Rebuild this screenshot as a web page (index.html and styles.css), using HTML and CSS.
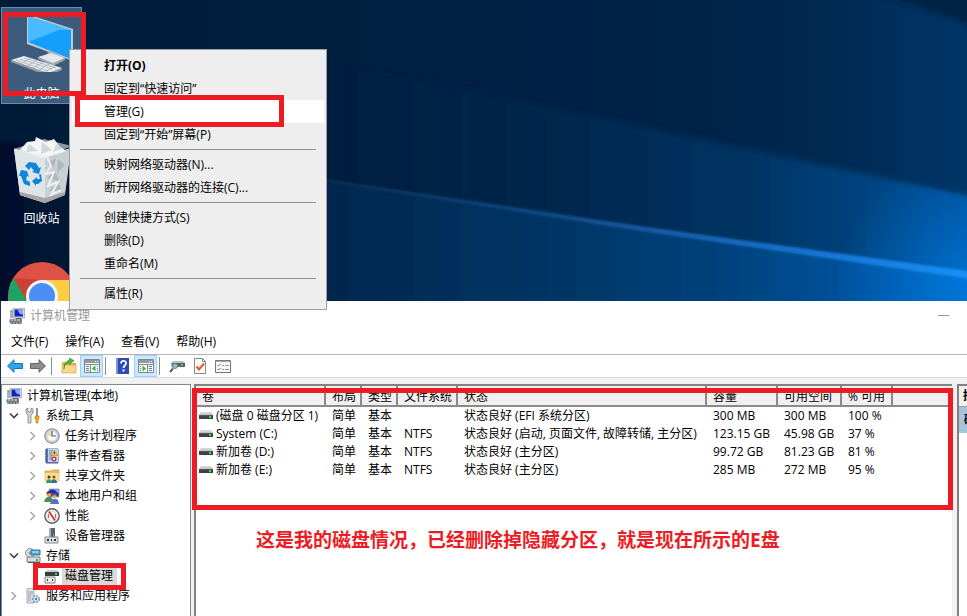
FILE: index.html
```html
<!DOCTYPE html>
<html lang="zh-CN">
<head>
  <meta charset="UTF-8">
  <title>计算机管理</title>
  <link rel="stylesheet" href="styles.css">
</head>
<body>
  <!-- shared icons -->
  <svg class="defs" aria-hidden="true">
    <symbol id="pc" viewBox="0 0 16 16">
      <rect x="1" y="2" width="3" height="8" fill="#a9b3bd"/>
      <rect x="2" y="3" width="1" height="1" fill="#3cc43c"/>
      <path d="M4 0h11.500v10H4z" fill="#d5d8dc" stroke="#8b939b" stroke-width=".6"/>
      <path d="M5.500 1.500h8.500v7H5.500z" fill="#1722b8"/>
      <path d="M9 1.500h5v5c-3 0-5-2-5-5z" fill="#8ea4ff"/>
      <path d="M7 10h5l1 1.500H6z" fill="#59636c"/>
      <path d="M1 11h12v3H0z" fill="#6f7b85"/>
      <path d="M2 12h2M5 12h2M8 12h3" stroke="#e8ecef"/>
      <path d="M1 14h12v2H1z" fill="#929ba2"/>
      <path d="M3 15h1M6 15h1M9 15h1" stroke="#333"/>
    </symbol>
    <symbol id="drive" viewBox="0 0 14 8">
      <path d="M2 0h10l2 3H0z" fill="#d3d6d9"/>
      <path d="M0 3h14v4H0z" fill="#3c4247"/>
      <path d="M0 3h14" stroke="#8b9094" stroke-width=".6"/>
      <rect x="10" y="4" width="2" height="2" fill="#36e336"/>
    </symbol>
    <symbol id="closed" viewBox="0 0 8 10">
      <path d="M1.500 1l4 4-4 4" fill="none" stroke="#a6a6a6" stroke-width="1.500"/>
    </symbol>
    <symbol id="opened" viewBox="0 0 10 8">
      <path d="M1 1.500l4 4 4-4" fill="none" stroke="#404040" stroke-width="1.600"/>
    </symbol>
    <symbol id="arrow" viewBox="0 0 16 14">
      <path d="M.5 7L7 .7v3.800h8.500v5H7v3.800z"/>
    </symbol>
  </svg>

  <section class="desktop">
    <svg class="wallpaper" viewBox="0 0 967 301" preserveAspectRatio="none" aria-hidden="true">
      <defs>
        <linearGradient id="sky" x1="0" y1="0" x2="1" y2="0">
          <stop offset="0" stop-color="#001b38"/>
          <stop offset=".35" stop-color="#001f3f"/>
          <stop offset=".7" stop-color="#002248"/>
          <stop offset=".85" stop-color="#002850"/>
          <stop offset="1" stop-color="#003668"/>
        </linearGradient>
        <linearGradient id="mid" x1="327" y1="0" x2="967" y2="0" gradientUnits="userSpaceOnUse">
          <stop offset="0" stop-color="#002247" stop-opacity="0"/>
          <stop offset=".4" stop-color="#002850"/>
          <stop offset=".65" stop-color="#003362"/>
          <stop offset=".85" stop-color="#004480"/>
          <stop offset="1" stop-color="#00529c"/>
        </linearGradient>
        <linearGradient id="low" x1="0" y1="0" x2="967" y2="0" gradientUnits="userSpaceOnUse">
          <stop offset="0" stop-color="#00102c"/>
          <stop offset=".35" stop-color="#002850"/>
          <stop offset=".6" stop-color="#003768"/>
          <stop offset=".75" stop-color="#00427c"/>
          <stop offset=".9" stop-color="#0055a2"/>
          <stop offset="1" stop-color="#0064bc"/>
        </linearGradient>
        <linearGradient id="beam" x1="327" y1="0" x2="967" y2="0" gradientUnits="userSpaceOnUse">
          <stop offset="0" stop-color="#123a66" stop-opacity=".5"/>
          <stop offset=".4" stop-color="#125090"/>
          <stop offset=".75" stop-color="#1272d0"/>
          <stop offset="1" stop-color="#1490f4"/>
        </linearGradient>
        <radialGradient id="glow" cx="967" cy="280" r="130" gradientUnits="userSpaceOnUse">
          <stop offset="0" stop-color="#0084f0" stop-opacity=".6"/>
          <stop offset="1" stop-color="#0078e0" stop-opacity="0"/>
        </radialGradient>
        <filter id="soft"><feGaussianBlur stdDeviation="3"/></filter>
        <filter id="softer"><feGaussianBlur stdDeviation="1"/></filter>
      </defs>
      <path d="M0 0h967v301H0z" fill="url(#sky)"/>
      <path d="M870-10h120v42z" fill="#002244" filter="url(#soft)"/>
      <path d="M327 60L640 126L990 201V290L640 229L327 181z" fill="url(#mid)" filter="url(#soft)"/>
      <path d="M-20 138L327 181L640 229L990 279V330H-20z" fill="url(#low)" filter="url(#softer)"/>
      <path d="M760 150L967 196V301H700z" fill="url(#glow)"/>
      <path d="M327 179L640 226L990 274V282L640 231L327 182z" fill="url(#beam)" filter="url(#softer)"/>
    </svg>

    <div class="shortcuts">
      <a class="shortcut selected" href="#">
        <svg width="64" height="64" viewBox="0 0 64 64" aria-hidden="true">
          <path d="M17 6l46 15v32L17 36z" fill="#c2c9cf"/>
          <path d="M18 8l43 14v29L18 34z" fill="#14a0fa"/>
          <path d="M18 8l43 14-12 0-31 12z" fill="#49bcff"/>
          <path d="M38 43l10 4-1 5-10-3z" fill="#9aa5ad"/>
          <path d="M28 49l13-4 14 5-12 6z" fill="#e4e8eb"/>
          <path d="M28 49l15 6 12-5v2l-12 6-15-7z" fill="#a0a8ae"/>
          <path d="M1 52l13-4 38 12-14 6z" fill="#e9ecee"/>
          <path d="M1 52l37 13 14-5v2l-14 6L1 54z" fill="#949da5"/>
          <path d="M6 52l32 11M10 51l32 10M14 50l32 10M11 56l10-6M17 58l10-6M23 60l10-6M29 62l10-6M35 64l10-6" stroke="#a7b0b7" stroke-width=".8"/>
        </svg>
        <span>此电脑</span>
      </a>
      <a class="shortcut" href="#">
        <svg width="64" height="68" viewBox="0 0 64 68" aria-hidden="true">
          <path d="M4 14l31 8 26-8-6 46-20 8-25-8z" fill="#c9d0d4"/>
          <path d="M4 14l31 8v46l-25-8z" fill="#dfe4e7"/>
          <path d="M4 14L34 4l28 7-27 11z" fill="#8698a6"/>
          <path d="M10 15l7-8 8-1 1-4 10 5 8-3 6 8 7 4-23 7z" fill="#f3f5f6"/>
          <path d="M19 9l9 7-12 1zM32 7l10 8-11 4zM46 9l-3 8 9-3z" fill="#d2d7da"/>
          <path d="M37 28l9-5-2 9zM48 24l7 6-8 8zM37 43l8-8 4 11zM39 56l9-9 4 9z" fill="#adb7be"/>
          <path d="M37 22l4 9-5 8 8-2-6 14 10-4-7 13 10-5" fill="none" stroke="#edf0f1" stroke-width="2"/>
          <path d="M10 60l25 8 20-8v-3l-20 6-25-6z" fill="#a7a5a5"/>
          <path d="M4 14l31 8 27-9" fill="none" stroke="#edf1f4"/>
          <path d="M15 31l4-4 7 1 3 5 2-1-2 7-7-2 2-1-3-4-2 3zM11 35l6 1 2 6-2-1-1 4 4 2v4l-6-2-3-8-2 0zM22 46l5-4v2l3 0-1-4 2-1 1 7-4 3-2 0v2z" fill="#0e86da"/>
        </svg>
        <span>回收站</span>
      </a>
      <a class="shortcut" href="#" aria-label="Chrome">
        <svg width="68" height="68" viewBox="0 0 68 68" aria-hidden="true">
          <circle cx="34" cy="34" r="34" fill="#de5246"/>
          <path d="M34 34L5.500 16A34 34 0 0 0 34 68z" fill="#1ea362"/>
          <path d="M34 18h30a34 34 0 0 1-30 50z" fill="#ffcd42"/>
          <path d="M5.500 16l16 28L34 18z" fill="#c94236"/>
          <circle cx="34" cy="34" r="16" fill="#f4f6f7"/>
          <circle cx="34" cy="34" r="13" fill="#4d8df6"/>
        </svg>
      </a>
    </div>

    <div class="context-menu">
      <button class="default">打开(O)</button>
      <button>固定到“快速访问”</button>
      <button class="hover">管理(G)<i class="mark mark-manage"></i></button>
      <button>固定到“开始”屏幕(P)</button>
      <hr>
      <button>映射网络驱动器(N)...</button>
      <button>断开网络驱动器的连接(C)...</button>
      <hr>
      <button>创建快捷方式(S)</button>
      <button>删除(D)</button>
      <button>重命名(M)</button>
      <hr>
      <button>属性(R)</button>
    </div>
    <i class="mark mark-pc"></i>
  </section>

  <main class="window">
    <header class="titlebar">
      <svg width="16" height="16"><use href="#pc"/></svg>
      <span>计算机管理</span>
      <button class="minimize" aria-label="最小化"></button>
    </header>
    <nav class="menubar">
      <button>文件(F)</button>
      <button>操作(A)</button>
      <button>查看(V)</button>
      <button>帮助(H)</button>
    </nav>
    <div class="toolbar">
      <button aria-label="后退"><svg width="16" height="14" fill="#2fa5e6" stroke="#1878b5"><use href="#arrow"/></svg></button>
      <button aria-label="前进"><svg class="flip" width="16" height="14" fill="#8c8c8c" stroke="#636363"><use href="#arrow"/></svg></button>
      <span class="sep"></span>
      <button aria-label="上一级">
        <svg width="16" height="16" viewBox="0 0 16 16">
          <path d="M1 4h5l1 1h8v10H1z" fill="#d9b354"/>
          <path d="M1 7h14v8H1z" fill="#f4d98a" stroke="#c59f45" stroke-width=".6"/>
          <path d="M3 11c0-4 2-6 5-6.500V6.500l5-3.800L8.500 0v2C5 3 3 6 3 11z" fill="#46b830" stroke="#2c8a1e" stroke-width=".6"/>
        </svg>
      </button>
      <button class="active" aria-label="显示控制台树">
        <svg width="16" height="14" viewBox="0 0 16 14">
          <path d="M.5.5h15v13H.5z" fill="#fff" stroke="#7d8791"/>
          <path d="M1 1h14v3H1z" fill="#909aa3"/><path d="M11 2.500h1M13 2.500h1" stroke="#fff"/>
          <path d="M0 5.500h16M6.500 5v9" stroke="#7d8791"/>
          <path d="M2 7.500h3M2 9.500h3M2 11.500h3M13 7.500h1M13 9.500h1M13 11.500h1" stroke="#557bb5"/>
          <path d="M11.500 6.500v6L8 9.500z" fill="#39b51c"/>
        </svg>
      </button>
      <span class="sep"></span>
      <button aria-label="帮助">
        <svg width="13" height="16" viewBox="0 0 13 16">
          <path d="M0 0h13v16H0z" fill="#2a4cb4"/><path d="M0 0h2v16H0z" fill="#7a94dd"/>
          <path d="M5 5.500C5 2 10 2 10 5.200C10 7.500 7.500 7.500 7.500 10" fill="none" stroke="#fff" stroke-width="1.800"/>
          <path d="M6.500 11.500h2v2h-2z" fill="#fff"/>
        </svg>
      </button>
      <button class="active" aria-label="显示操作窗格">
        <svg width="16" height="14" viewBox="0 0 16 14">
          <path d="M.5.5h15v13H.5z" fill="#fff" stroke="#7d8791"/>
          <path d="M1 1h14v3H1z" fill="#909aa3"/><path d="M11 2.500h1M13 2.500h1" stroke="#fff"/>
          <path d="M0 5.500h16M9.500 5v9" stroke="#7d8791"/>
          <path d="M11 7.500h3M11 9.500h3M11 11.500h3M2 7.500h1M2 9.500h1M2 11.500h1" stroke="#557bb5"/>
          <path d="M4.500 6.500v6L8 9.500z" fill="#39b51c"/>
        </svg>
      </button>
      <span class="sep"></span>
      <button aria-label="连接">
        <svg width="16" height="14" viewBox="0 0 16 14">
          <path d="M4 2h10l2 2v4H2V4z" fill="#b9bec2"/><path d="M3 4h13v4H3z" fill="#59636a"/>
          <rect x="12" y="5" width="2" height="2" fill="#32d84c"/>
          <circle cx="6" cy="7" r="2.500" fill="#9fb9cb" stroke="#6e7e8a"/>
          <path d="M4 9.500L1 13" stroke="#555f68" stroke-width="2"/>
        </svg>
      </button>
      <button aria-label="检查">
        <svg width="12" height="16" viewBox="0 0 12 16">
          <path d="M.5.5h8l3 3v12H.5z" fill="#fff" stroke="#878787"/>
          <path d="M8.500.5v3h3" fill="none" stroke="#878787"/>
          <path d="M2.500 8.500L5 11.500l5-6" fill="none" stroke="#e2572b" stroke-width="2"/>
        </svg>
      </button>
      <button aria-label="属性">
        <svg width="16" height="13" viewBox="0 0 16 13">
          <path d="M.5.5h15v12H.5z" fill="#f5f6f7" stroke="#777"/>
          <path d="M1 1.500h14" stroke="#aaa"/>
          <path d="M2.500 5l1 1 2-2M2.500 9l1 1 2-2" fill="none" stroke="#2d7ec9"/>
          <path d="M7 5.500h2M10 5.500h4M7 9.500h2M10 9.500h4" stroke="#8d969d"/>
        </svg>
      </button>
    </div>

    <div class="panes">
      <aside class="tree">
        <ul>
          <li class="root"><svg class="icon"><use href="#pc"/></svg><span>计算机管理(本地)</span></li>
          <li class="group">
            <svg class="toggle"><use href="#opened"/></svg>
            <svg class="icon" viewBox="0 0 16 16">
              <path d="M1 1v4l2 2v8h3V7l2-2V1L6 0v4H3V0z" fill="#d4d7da" stroke="#777e84" stroke-width=".8"/>
              <path d="M11 0h2v8h-2z" fill="#8d9499"/><path d="M10 8h4v3l-1 1v3h-2v-3l-1-1z" fill="#f0a818" stroke="#b97a0c" stroke-width=".6"/>
            </svg>
            <span>系统工具</span>
          </li>
          <li class="leaf">
            <svg class="toggle"><use href="#closed"/></svg>
            <svg class="icon" viewBox="0 0 16 16">
              <circle cx="8" cy="8" r="7.200" fill="#d9dcdf" stroke="#767c82"/><circle cx="8" cy="8" r="5.400" fill="#f8f8f5" stroke="#a5a9ac" stroke-width=".6"/>
              <path d="M8 2.800v5.200H3a5 5 0 0 1 5-5.200z" fill="#f6dfa0"/><path d="M8 3v5h4" fill="none" stroke="#3668a8" stroke-width="1.200"/>
            </svg>
            <span>任务计划程序</span>
          </li>
          <li class="leaf">
            <svg class="toggle"><use href="#closed"/></svg>
            <svg class="icon" viewBox="0 0 16 16">
              <path d="M2 1h12v14H2z" fill="#5478b8" stroke="#43659a"/><path d="M4 1h10v13H4z" fill="#c7d5ea"/>
              <path d="M5 3h4M5 5h3M5 7h3M5 9h3M5 11h3" stroke="#6685b5"/><path d="M10.500 2l3 5.500h-6z" fill="#ffd21a" stroke="#a98500" stroke-width=".6"/><path d="M10.500 4v2" stroke="#222"/>
              <circle cx="10" cy="11" r="2.500" fill="#d8293b"/><path d="M9 10l2 2M11 10l-2 2" stroke="#fff"/>
              <path d="M1 3h2M1 6h2M1 9h2M1 12h2" stroke="#555"/>
            </svg>
            <span>事件查看器</span>
          </li>
          <li class="leaf">
            <svg class="toggle"><use href="#closed"/></svg>
            <svg class="icon" viewBox="0 0 16 16">
              <path d="M1 3h6l1-1h7v11H1z" fill="#e7c05e" stroke="#ba913b" stroke-width=".6"/><path d="M1 5h14v9H1z" fill="#f8dd91"/>
              <circle cx="5" cy="9" r="1.500" fill="#53352a"/><path d="M2 15c0-5 6-5 6 0z" fill="#3d9c54"/><circle cx="10" cy="9" r="1.500" fill="#7c5338"/><path d="M7 15c0-5 6-5 6 0z" fill="#2f6fb0"/>
            </svg>
            <span>共享文件夹</span>
          </li>
          <li class="leaf">
            <svg class="toggle"><use href="#closed"/></svg>
            <svg class="icon" viewBox="0 0 16 16">
              <path d="M5 1h10v8H5z" fill="#1a2fbe" stroke="#aab0b8"/><path d="M10 1.500h4.500v4z" fill="#8ca3ff"/>
              <circle cx="5" cy="6" r="2.500" fill="#d8a171"/><path d="M2.500 6c0-4 5-4 5 0l-2-1z" fill="#4c3020"/><path d="M0 14c1-7 9-7 9 0z" fill="#4d8e50"/>
              <circle cx="10.500" cy="8" r="2.300" fill="#dfb07f"/><path d="M8 8c0-4 5-4 5 0l-2-1z" fill="#7a5230"/><path d="M6 16c1-7 9-7 9 0z" fill="#5176bd"/>
            </svg>
            <span>本地用户和组</span>
          </li>
          <li class="leaf">
            <svg class="toggle"><use href="#closed"/></svg>
            <svg class="icon" viewBox="0 0 16 16">
              <circle cx="8" cy="8" r="7.200" fill="#fff" stroke="#555b60" stroke-width="1.400"/>
              <circle cx="8" cy="8" r="5" fill="#f7f7f7" stroke="#b9bdc0" stroke-width=".6"/>
              <path d="M5 3.500l6 9" stroke="#d02932" stroke-width="1.600"/><path d="M4.500 10V6M11.500 6v4" fill="none" stroke="#e05a60"/>
            </svg>
            <span>性能</span>
          </li>
          <li class="leaf">
            <svg class="toggle"></svg>
            <svg class="icon" viewBox="0 0 16 16">
              <path d="M6 0h5v9H6z" fill="#596168"/><path d="M5 0h2v9H5z" fill="#a9b0b6"/><rect x="9" y="6" width="1" height="2" fill="#36d14b"/>
              <path d="M1 9h13v6H1z" fill="#dcdfe1" stroke="#858b90"/><path d="M3 12h2M7 12h1M10 12h2" stroke="#333" stroke-width="2"/>
            </svg>
            <span>设备管理器</span>
          </li>
          <li class="group">
            <svg class="toggle"><use href="#opened"/></svg>
            <svg class="icon" viewBox="0 0 16 16">
              <circle cx="5" cy="5" r="4.500" fill="#d8dde1" stroke="#89939b"/><circle cx="5" cy="5" r="1.500" fill="#899ba7"/>
              <path d="M6 2h9v5H6z" fill="#4fa6d2" stroke="#3a7797"/><path d="M7 4h7" stroke="#c4ebfb"/>
              <path d="M2 9h13v5H2z" fill="#d8dcdf" stroke="#767f86"/><path d="M3 14.500h12" stroke="#555"/><rect x="11" y="11" width="2" height="2" fill="#2faf3b"/>
            </svg>
            <span>存储</span>
          </li>
          <li class="leaf current">
            <svg class="toggle"></svg>
            <svg class="icon" viewBox="0 0 16 16">
              <path d="M3 2h10l2 2H1z" fill="#c8ccd0"/><path d="M1 4h14v4H1z" fill="#383d41"/><rect x="11" y="5" width="2" height="2" fill="#36d14b"/>
              <path d="M1 9h10v6H1z" fill="#e9ebec" stroke="#7c8287"/><path d="M3 12h1M8 12h1" stroke="#333" stroke-width="2"/>
            </svg>
            <span>磁盘管理</span>
            <i class="mark mark-disk"></i>
          </li>
          <li class="group">
            <svg class="toggle"><use href="#closed"/></svg>
            <svg class="icon" viewBox="0 0 16 16">
              <path d="M2 1l4-1 3 1v14H2z" fill="#dce1e5" stroke="#929ba2" stroke-width=".8"/><path d="M3 4h5M3 6h5M3 8h3M3 10h3M3 12h3" stroke="#9aa3aa"/>
              <circle cx="11" cy="11" r="3.300" fill="#d7e8f5" stroke="#7894aa" stroke-width="1.500" stroke-dasharray="2 1"/><circle cx="11" cy="11" r="1.300" fill="#6687a2"/>
            </svg>
            <span>服务和应用程序</span>
          </li>
        </ul>
      </aside>

      <section class="volumes">
        <table>
          <colgroup>
            <col class="c-name"><col class="c-short"><col class="c-short"><col class="c-fs"><col>
            <col class="c-size"><col class="c-free"><col class="c-pct"><col class="c-rest">
          </colgroup>
          <thead>
            <tr><th>卷</th><th>布局</th><th>类型</th><th>文件系统</th><th>状态</th><th>容量</th><th>可用空间</th><th>% 可用</th><th></th></tr>
          </thead>
          <tbody>
            <tr><td><svg class="drive"><use href="#drive"/></svg>(磁盘 0 磁盘分区 1)</td><td>简单</td><td>基本</td><td></td><td>状态良好 (EFI 系统分区)</td><td>300 MB</td><td>300 MB</td><td>100 %</td><td></td></tr>
            <tr><td><svg class="drive"><use href="#drive"/></svg>System (C:)</td><td>简单</td><td>基本</td><td>NTFS</td><td>状态良好 (启动, 页面文件, 故障转储, 主分区)</td><td>123.15 GB</td><td>45.98 GB</td><td>37 %</td><td></td></tr>
            <tr><td><svg class="drive"><use href="#drive"/></svg>新加卷 (D:)</td><td>简单</td><td>基本</td><td>NTFS</td><td>状态良好 (主分区)</td><td>99.72 GB</td><td>81.23 GB</td><td>81 %</td><td></td></tr>
            <tr><td><svg class="drive"><use href="#drive"/></svg>新加卷 (E:)</td><td>简单</td><td>基本</td><td>NTFS</td><td>状态良好 (主分区)</td><td>285 MB</td><td>272 MB</td><td>95 %</td><td></td></tr>
          </tbody>
        </table>
        <i class="mark mark-volumes"></i>
        <p class="note">这是我的磁盘情况，已经删除掉隐藏分区，就是现在所示的E盘</p>
      </section>

      <aside class="actions">
        <h2>操作</h2>
        <div class="actions-group">磁盘管理</div>
      </aside>
    </div>
  </main>
</body>
</html>
```
FILE: styles.css
```css
* {
  box-sizing: border-box;
}
body {
  margin: 0;
  height: 100vh;
  display: flex;
  flex-direction: column;
  overflow: hidden;
  background-color: #1c3450;
  font-family: "Open Sans", "Noto Sans CJK SC", sans-serif;
  font-size: 12px;
  line-height: 20px;
  color: #000;
}
button {
  border: 0;
  padding: 0;
  background: none;
  font: inherit;
  color: inherit;
}
svg {
  display: block;
  flex: none;
}
.defs {
  position: absolute;
  width: 0;
  height: 0;
}

/* red highlight frames */
.mark {
  position: absolute;
  z-index: 5;
  border: 5px solid #ed1c24;
  pointer-events: none;
}
.mark-pc {
  left: 3px;
  top: 12px;
  width: 83px;
  height: 84px;
}
.mark-manage {
  left: 3px;
  top: -5px;
  width: 209px;
  height: 32px;
}
.mark-disk {
  left: 31px;
  top: -3px;
  width: 93px;
  height: 27px;
}
.mark-volumes {
  left: -4px;
  right: -1px;
  top: 2px;
  height: 122px;
}

/* desktop */
.desktop {
  position: relative;
  z-index: 2;
  flex: none;
  height: 301px;
}
.wallpaper {
  position: absolute;
  width: 100%;
  height: 100%;
}
.shortcuts {
  height: 100%;
  width: 82px;
  padding: 7px 0 0 1px;
  display: flex;
  flex-direction: column;
  gap: 30px;
  overflow: hidden;
}
.shortcut {
  position: relative;
  flex: none;
  height: 97px;
  border: 1px solid transparent;
  display: flex;
  flex-direction: column;
  align-items: center;
  gap: 6px;
  color: #fff;
  text-decoration: none;
}
.shortcut.selected {
  gap: 12px;
  background-color: #3c5b7d;
  border-color: #6d8ba8;
}
.context-menu {
  position: absolute;
  z-index: 3;
  left: 69px;
  top: 49px;
  width: 258px;
  padding: 4px 2px;
  border: 1px solid #a0a0a0;
  background-color: #eee;
}
.context-menu button {
  position: relative;
  display: block;
  width: 100%;
  height: 23px;
  padding-left: 32px;
  text-align: left;
}
.context-menu .default {
  font-weight: bold;
}
.context-menu .hover {
  background-color: #fff;
}
.context-menu hr {
  margin: 3px 8px;
  border: 0;
  border-top: 1px solid #919191;
}

/* management window */
.window {
  flex: 1;
  min-height: 0;
  margin-left: 1px;
  display: flex;
  flex-direction: column;
  background-color: #f0f0f0;
}
.titlebar, .menubar, .toolbar {
  flex: none;
  display: flex;
  align-items: center;
  background-color: #fff;
}
.titlebar {
  height: 29px;
  padding: 0 18px 0 8px;
  gap: 5px;
  color: #999;
}
.minimize {
  margin-left: auto;
  width: 11px;
  height: 1px;
  background-color: #999;
}
.menubar {
  height: 25px;
  padding-left: 10px;
  gap: 17px;
  border-bottom: 1px solid #b4b4b4;
}
.toolbar {
  height: 23px;
  padding-left: 2px;
  border-bottom: 1px solid #dcdcdc;
}
.toolbar button {
  width: 23px;
  height: 22px;
  display: flex;
  align-items: center;
  justify-content: center;
}
.toolbar .active {
  background-color: #cce8ff;
  border: 1px solid #99d1ff;
}
.sep {
  width: 1px;
  height: 18px;
  margin: 0 5px 0 2px;
  background-color: #8c8c8c;
}
.flip {
  transform: scaleX(-1);
}
.panes {
  flex: 1;
  min-height: 0;
  display: flex;
  margin-top: 6px;
}

/* tree */
.tree {
  width: 190px;
  flex: none;
  border: 1px solid #828790;
  border-bottom: 0;
  background-color: #fff;
  margin-right: 3px;
}
.tree ul {
  list-style: none;
  margin: 0;
  padding: 1px 0 0;
}
.tree li {
  position: relative;
  height: 20px;
  display: flex;
  align-items: center;
  gap: 4px;
  white-space: nowrap;
}
.icon {
  width: 16px;
  height: 16px;
}
.toggle {
  width: 10px;
  height: 10px;
  margin-right: 2px;
}
.root {
  padding-left: 4px;
}
.group {
  padding-left: 7px;
}
.leaf {
  padding-left: 26px;
}
.tree span {
  padding-left: 1px;
}
.tree .current span {
  background-color: #d9d9d9;
  margin-left: -2px;
  padding: 0 4px 0 3px;
}

/* volume list */
.volumes {
  position: relative;
  flex: 1;
  min-width: 0;
  border-left: 2px solid #828282;
  border-top: 2px solid #828282;
  background-color: #fff;
}
table {
  width: 100%;
  table-layout: fixed;
  border-collapse: separate;
  border-spacing: 0;
}
.c-name { width: 130px; }
.c-short { width: 36px; }
.c-fs { width: 60px; }
.c-size { width: 71px; }
.c-free { width: 64px; }
.c-pct { width: 51px; }
.c-rest { width: 59px; }
th, td {
  padding: 0 0 0 6px;
  text-align: left;
  font-weight: normal;
  white-space: nowrap;
}
th {
  height: 21px;
  padding-top: 3px;
  background-color: #f0f0f0;
  border-right: 2px solid #8a8a8a;
  border-bottom: 2px solid #8a8a8a;
  line-height: 16px;
}
th:last-child {
  border-right: 0;
}
td {
  height: 18px;
  line-height: 18px;
}
td:first-child {
  padding-left: 3px;
}
.drive {
  display: inline-block;
  width: 14px;
  height: 8px;
  margin-right: 3px;
}
.note {
  margin: 47px 0 0 60px;
  font-size: 19px;
  line-height: 28px;
  font-weight: bold;
  color: #ed1c24;
}

/* actions pane, mostly off screen */
.actions {
  width: 10px;
  flex: none;
  margin-left: 5px;
  border-left: 2px solid #828282;
  border-top: 2px solid #828282;
  background-color: #fff;
  overflow: hidden;
  white-space: nowrap;
}
.actions h2 {
  margin: 0;
  height: 21px;
  padding-left: 4px;
  border-bottom: 1px solid #a0a0a0;
  background-color: #f0f0f0;
  font-size: 12px;
}
.actions-group {
  height: 26px;
  padding-left: 5px;
  line-height: 26px;
  font-weight: bold;
  background-color: #a9c2de;
}
```
